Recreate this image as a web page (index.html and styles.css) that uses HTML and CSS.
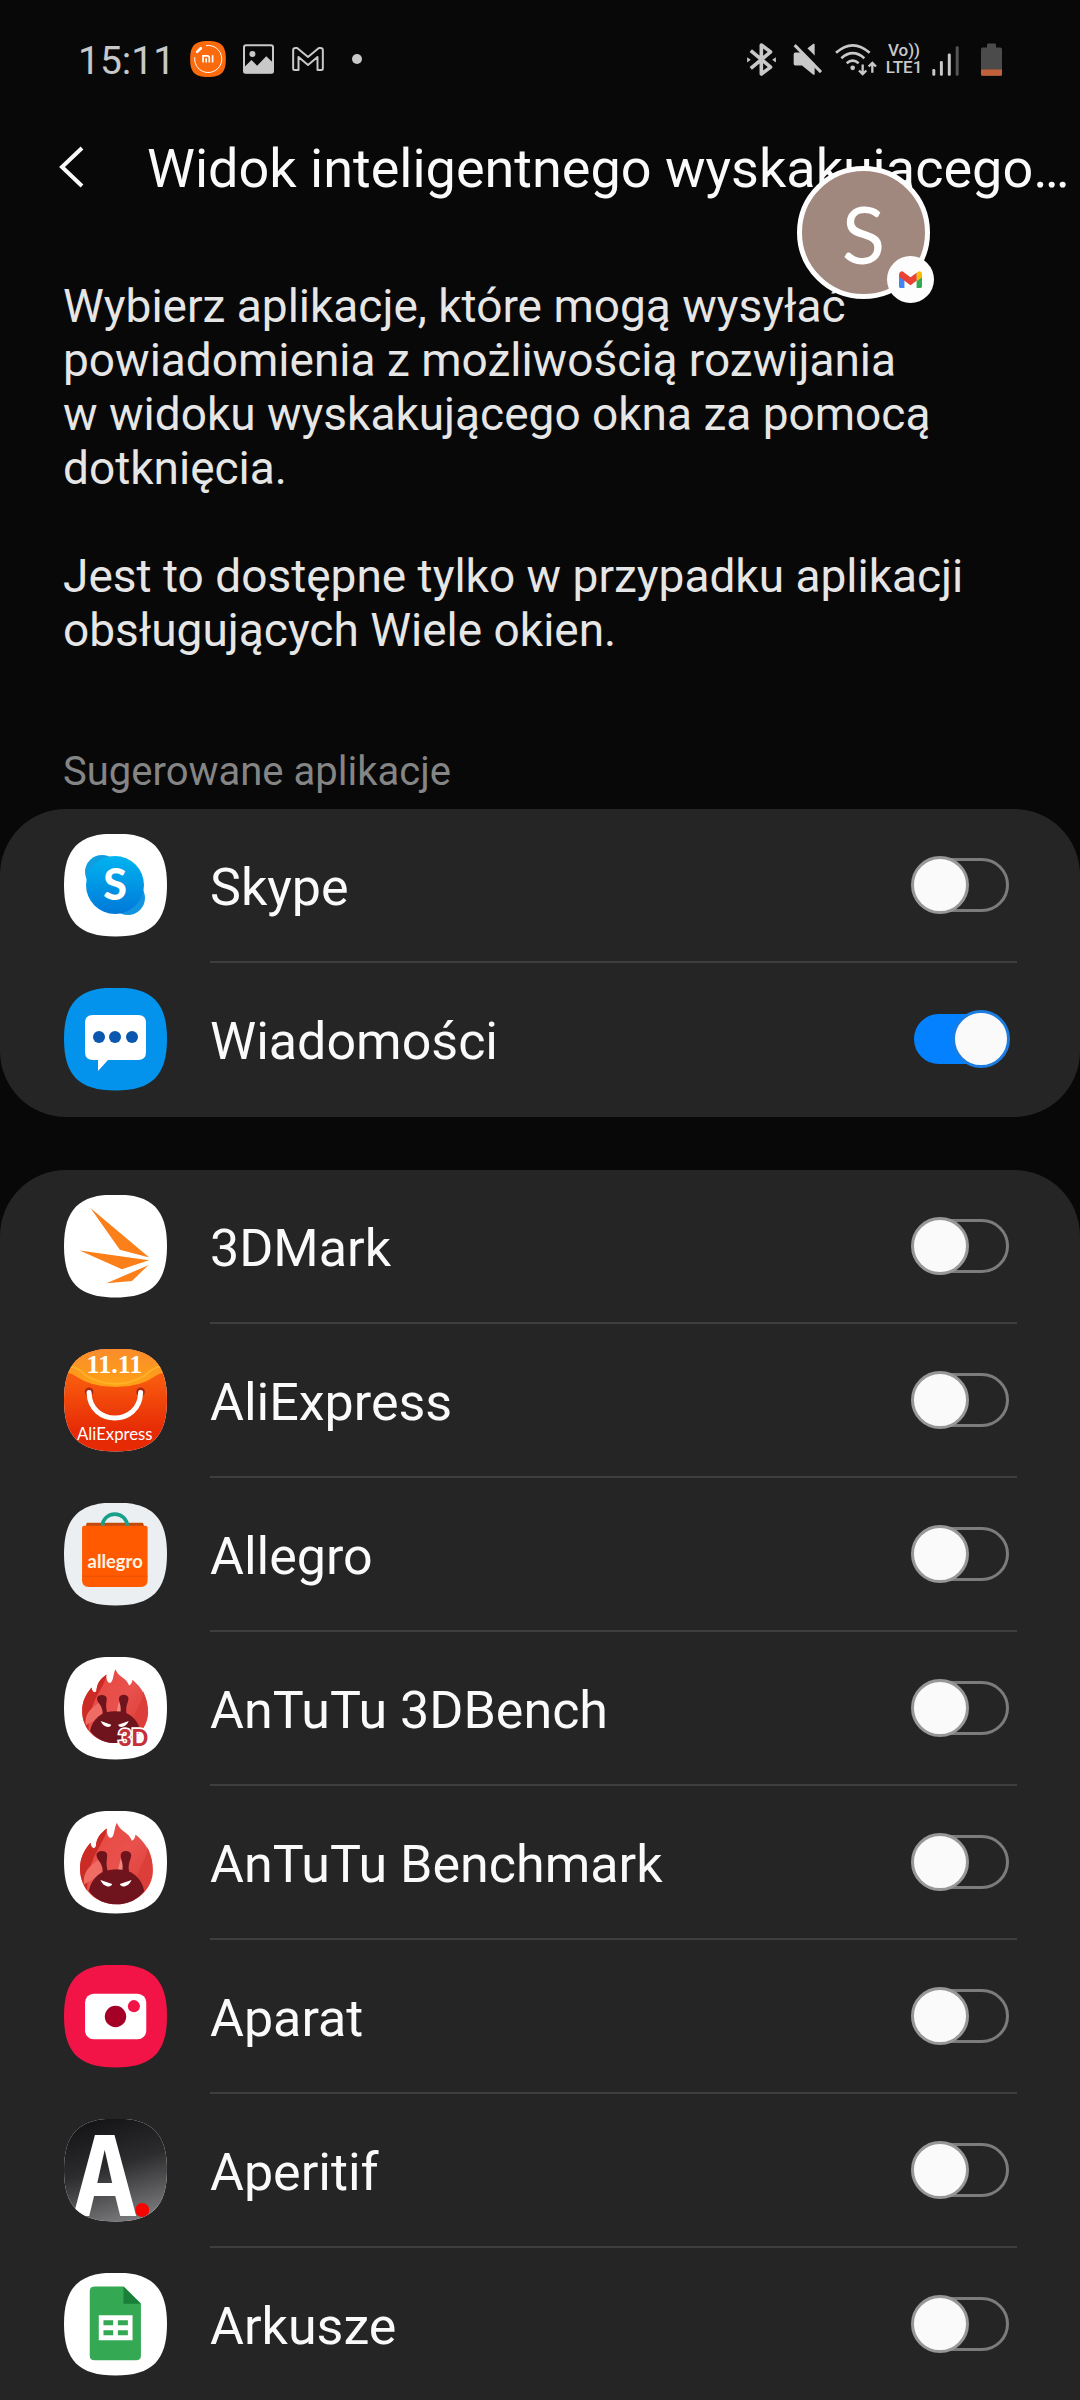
FILE: index.html
```html
<!DOCTYPE html>
<html lang="pl">
<head>
<meta charset="utf-8">
<meta name="viewport" content="width=device-width, initial-scale=1">
<title>Widok inteligentnego wyskakującego okna</title>
<link rel="stylesheet" href="styles.css">
</head>
<body>
<div class="status-bar">
  <div class="status-left">
    <time class="clock">15:11</time>
    <svg class="st-mi" viewBox="420 65 108 109" aria-hidden="true">
      <path fill="#fb6a0d" d="M474 65C514 65 528 79 528 119.500S514 174 474 174 420 160 420 119.500 434 65 474 65Z"/>
      <path d="M468 79A41 41 0 1 1 434 114" fill="none" stroke="#fff" stroke-width="3"/>
      <path d="M441 98L452 87" stroke="#fff" stroke-width="8" stroke-linecap="round"/>
      <path d="M459 130V110H471Q478 110 478 117V130M468.500 117V130M488 108V130" fill="none" stroke="#fff" stroke-width="5"/>
    </svg>
    <svg class="st-pic" viewBox="578 74 92 88" aria-hidden="true">
      <rect x="581" y="77" width="86" height="82" rx="6" fill="none" stroke="#c8c8c8" stroke-width="6"/>
      <circle cx="606" cy="103" r="9" fill="#c8c8c8"/>
      <path d="M580 144L603 121 620 138 647 110 668 130V160H580Z" fill="#c8c8c8"/>
    </svg>
    <svg class="st-gmail" viewBox="727 82 95 72" aria-hidden="true">
      <path d="M730 147V92Q730 85 737 85H742L774.500 112 807 85H812Q819 85 819 92V147Q819 151 815 151H803V112L774.500 136 746 112V151H734Q730 151 730 147Z" fill="none" stroke="#c8c8c8" stroke-width="6" stroke-linejoin="round"/>
    </svg>
    <span class="st-dot"></span>
  </div>
  <div class="status-right">
    <svg class="st-bt" viewBox="81 68 87 100" aria-hidden="true">
      <path d="M92 91L152 141 124 162V74L152 95 92 145" fill="none" stroke="#c8c8c8" stroke-width="11" stroke-linejoin="round"/>
      <path d="M81 111L92 119 81 127ZM168 111L157 119 168 127Z" fill="#c8c8c8"/>
    </svg>
    <svg class="st-mute" viewBox="219 70 90 98" aria-hidden="true">
      <path d="M226 98H246L280 72Q284 70 284 75V162Q284 167 279 164L246 137H226Q221 137 221 132V103Q221 98 226 98Z" fill="#c8c8c8"/>
      <path d="M230 66L316 151" stroke="#080808" stroke-width="18"/>
      <path d="M224 76L303 157" stroke="#c8c8c8" stroke-width="9"/>
    </svg>
    <svg class="st-wifi" viewBox="344 68 126 98" aria-hidden="true">
      <g fill="none" stroke="#c8c8c8" stroke-width="8">
        <path d="M347 97Q397 52 448 97M363 113Q397 83 432 113M379 128Q397 113 415 128"/>
        <path stroke-width="7" d="M427 132V160M416 150L427 161 438 150M456 157V128M445 138L456 127 467 138"/>
      </g>
      <circle cx="397" cy="142" r="7" fill="#c8c8c8"/>
    </svg>
    <span class="st-lte"><span>Vo))</span><span>LTE1</span></span>
    <svg class="st-signal" viewBox="636 76 82 90" aria-hidden="true">
      <g fill="#c8c8c8"><rect x="637" y="145" width="9" height="21" rx="4"/><rect x="660" y="121" width="9" height="45" rx="4"/><rect x="684" y="98" width="9" height="68" rx="4"/></g>
      <rect x="708" y="76" width="9" height="90" rx="4" fill="#555"/>
    </svg>
    <svg class="st-battery" viewBox="783 70 63 98" aria-hidden="true">
      <rect x="801" y="71" width="27" height="20" rx="3" fill="#4b4b4b"/>
      <rect x="783" y="83" width="63" height="85" rx="5" fill="#4b4b4b"/>
      <path d="M783 149H846V163Q846 168 841 168H788Q783 168 783 163Z" fill="#c1603a"/>
    </svg>
  </div>
</div>

<header class="app-bar">
  <button class="back" type="button" aria-label="Wstecz">
    <svg viewBox="0 0 26 42" aria-hidden="true"><path d="M23 2L3 21 23 40" fill="none" stroke="#fafafa" stroke-width="4"/></svg>
  </button>
  <h1>Widok inteligentnego wyskakującego…</h1>
</header>

<main class="content">
  <div class="intro">
    <p>Wybierz aplikacje, które mogą wysyłać powiadomienia z&nbsp;możliwością rozwijania w&nbsp;widoku wyskakującego okna za pomocą dotknięcia.</p>
    <p>Jest to dostępne tylko w&nbsp;przypadku aplikacji obsługujących Wiele okien.</p>
  </div>

  <h2>Sugerowane aplikacje</h2>
  <ul class="card">
    <li class="row">
      <svg class="icon" viewBox="0 0 103 103" aria-hidden="true">
        <defs>
          <linearGradient id="sk" x1="0" y1="0" x2="0" y2="1"><stop offset="0" stop-color="#00b4f0"/><stop offset="1" stop-color="#0078d9"/></linearGradient>
        </defs>
        <circle cx="38" cy="38" r="17" fill="#0f9fe0"/><circle cx="64" cy="64" r="17" fill="#1493e0"/>
        <circle cx="51" cy="51" r="29" fill="url(#sk)"/>
        <text x="51" y="66" text-anchor="middle" font-family="Lato, sans-serif" font-weight="900" font-size="43" fill="#fff">S</text>
      </svg>
      <div class="row-body"><label for="a1">Skype</label><input id="a1" type="checkbox" role="switch"></div>
    </li>
    <li class="row">
      <svg class="icon icon-msg" viewBox="0 0 103 103" aria-hidden="true">
        <path d="M29 27H74Q82 27 82 35V64Q82 72 74 72H44L34 83V72H29Q21 72 21 64V35Q21 27 29 27Z" fill="#fff"/>
        <g fill="#0a57b0"><circle cx="35" cy="49" r="6"/><circle cx="51" cy="49" r="6"/><circle cx="68" cy="49" r="6"/></g>
      </svg>
      <div class="row-body"><label for="a2">Wiadomości</label><input id="a2" type="checkbox" role="switch" checked></div>
    </li>
  </ul>

  <ul class="card card-long">
    <li class="row">
      <svg class="icon" viewBox="43 75 308 308" aria-hidden="true">
        <path d="M122 114L298 262 210 239ZM90 241L297 270 216 297ZM295 285L246 332 170 339Z" fill="#fb8019"/>
      </svg>
      <div class="row-body"><label for="b1">3DMark</label><input id="b1" type="checkbox" role="switch"></div>
    </li>
    <li class="row">
      <svg class="icon" viewBox="43 538 308 308" aria-hidden="true">
        <defs>
          <linearGradient id="ali" x1="0" y1="0" x2="0" y2="1"><stop offset="0.300" stop-color="#f8590e"/><stop offset="0.800" stop-color="#e62a05"/></linearGradient>
          <linearGradient id="ali2" x1="0" y1="0" x2="0" y2="1"><stop offset="0" stop-color="#f98c2c"/><stop offset="1" stop-color="#ffa216"/></linearGradient>
        </defs>
        <path d="M43 538H351V846H43Z" fill="url(#ali)"/>
        <path d="M43 538H351V612Q335 606 318 618Q270 652 197 652T76 618Q59 606 43 612Z" fill="url(#ali2)"/>
        <path d="M60 590Q85 592 110 618 150 642 197 642T284 618Q309 592 334 590" fill="none" stroke="#ffc02e" stroke-width="6" opacity="0.600"/>
        <text x="194" y="611" text-anchor="middle" font-family="Liberation Serif, serif" font-weight="700" font-size="78" fill="#fff">11.11</text>
        <circle cx="118" cy="666" r="13" fill="#a92a12"/><circle cx="272" cy="666" r="13" fill="#a92a12"/>
        <path d="M118 668C120 770 270 770 272 668" fill="none" stroke="#fff" stroke-width="15" stroke-linecap="round"/>
        <text x="195" y="810" text-anchor="middle" font-family="Lato, sans-serif" font-size="50" fill="#fff">AliExpress</text>
      </svg>
      <div class="row-body"><label for="b2">AliExpress</label><input id="b2" type="checkbox" role="switch"></div>
    </li>
    <li class="row">
      <svg class="icon icon-allegro" viewBox="43 69 308 308" aria-hidden="true">
        <path d="M111 128H279L284 142H107Z" fill="#c24b0c"/>
        <path d="M97 143Q97 137 103 137H287Q293 137 293 143V300Q293 320 273 320H117Q97 320 97 300Z" fill="#ff5a00"/>
        <path d="M97 288H293" stroke="#e85204" stroke-width="3"/>
        <path d="M158 137A37 35 0 0 1 232 137" fill="none" stroke="#18a18a" stroke-width="11"/>
        <text x="196" y="262" text-anchor="middle" font-family="Lato, sans-serif" font-weight="700" font-size="55" fill="#fff3e4">allegro</text>
      </svg>
      <div class="row-body"><label for="b3">Allegro</label><input id="b3" type="checkbox" role="switch"></div>
    </li>
    <li class="row">
      <svg class="icon" viewBox="43 532 308 308" aria-hidden="true">
        <defs>
          <linearGradient id="fire" x1="0" y1="0" x2="1" y2="1"><stop offset="0" stop-color="#e8453f"/><stop offset="0.500" stop-color="#e9514c"/><stop offset="1" stop-color="#d93832"/></linearGradient>
          <g id="antutu">
            <path d="M91 235C91 202 104 180 122 158C124 172 131 179 138 170C140 142 152 130 171 115C170 130 175 144 184 143C195 138 192 115 201 98C211 125 238 126 246 152C253 148 256 142 257 133C290 160 309 195 309 240C309 300 255 342 200 342C140 342 91 300 91 235Z" fill="url(#fire)"/>
            <path d="M91 235C91 202 104 180 122 158C124 172 131 179 138 170C140 142 152 130 171 115C165 165 115 190 112 300C97 280 91 258 91 235Z" fill="#cb2b25"/>
            <path d="M103 283C98 240 125 225 150 205L160 250Z" fill="#ee6c63"/>
            <path d="M216 192L204 240H232Z" fill="#f08a80"/>
            <path d="M292 170C296 200 270 220 262 262L285 300C312 262 314 215 292 170Z" fill="#dc3f39"/>
            <path d="M117 302C125 262 155 237 200 237S275 262 283 302C262 330 232 342 200 342S138 330 117 302Z" fill="#6f141c"/>
            <path d="M158 250C164 220 140 212 140 194C141 179 170 179 172 193C173 207 166 215 175 248ZM216 248C224 218 210 207 213 192C217 178 243 180 244 194C244 210 231 220 239 250Z" fill="#6f141c"/>
            <path d="M152 269L187 281C184 294 160 290 152 269ZM245 269L210 281C213 294 237 290 245 269Z" fill="#fff"/>
          </g>
        </defs>
        <use href="#antutu" transform="translate(15 480) scale(0.905)"/>
        <text x="251" y="799" text-anchor="middle" font-family="Liberation Sans, sans-serif" font-weight="700" font-size="70" fill="#c4313a" class="outlined">3D</text>
      </svg>
      <div class="row-body"><label for="b4">AnTuTu 3DBench</label><input id="b4" type="checkbox" role="switch"></div>
    </li>
    <li class="row">
      <svg class="icon" viewBox="43 63 308 308" aria-hidden="true"><use href="#antutu"/></svg>
      <div class="row-body"><label for="b5">AnTuTu Benchmark</label><input id="b5" type="checkbox" role="switch"></div>
    </li>
    <li class="row">
      <svg class="icon icon-aparat" viewBox="43 525 308 308" aria-hidden="true">
        <rect x="106" y="611" width="183" height="136" rx="26" fill="#fff"/>
        <circle cx="197" cy="679" r="32" fill="#a50026"/><circle cx="252" cy="648" r="18" fill="#f31447"/>
      </svg>
      <div class="row-body"><label for="b6">Aparat</label><input id="b6" type="checkbox" role="switch"></div>
    </li>
    <li class="row">
      <svg class="icon" viewBox="43 57 308 308" aria-hidden="true">
        <defs>
          <linearGradient id="ap" x1="0.350" y1="0" x2="0.650" y2="1"><stop offset="0" stop-color="#151416"/><stop offset="0.450" stop-color="#2c2c2e"/><stop offset="1" stop-color="#7c7c7e"/></linearGradient>
        </defs>
        <path d="M43 57H351V365H43Z" fill="url(#ap)"/>
        <text x="165" y="346" text-anchor="middle" font-family="DejaVu Sans Mono, monospace" font-weight="700" font-size="330" fill="#fff">A</text>
        <circle cx="277" cy="329" r="21" fill="#f60400"/>
      </svg>
      <div class="row-body"><label for="b7">Aperitif</label><input id="b7" type="checkbox" role="switch"></div>
    </li>
    <li class="row">
      <svg class="icon" viewBox="43 519 308 308" aria-hidden="true">
        <path d="M134 559H221L273 611V766Q273 780 259 780H134Q120 780 120 766V573Q120 559 134 559Z" fill="#34a853"/>
        <path d="M221 559L273 611H221Z" fill="#188038"/>
        <path d="M147 645H248V720H147Z" fill="#fff"/>
        <path d="M161 660H190V675H161ZM204 660H234V675H204ZM161 690H190V705H161ZM204 690H234V705H204Z" fill="#34a853"/>
      </svg>
      <div class="row-body"><label for="b8">Arkusze</label><input id="b8" type="checkbox" role="switch"></div>
    </li>
  </ul>
</main>

<button class="bubble" type="button" aria-label="Powiadomienie Gmail">
  <span class="bubble-face">S</span>
  <span class="bubble-badge">
    <svg viewBox="358 362 68 50" aria-hidden="true">
      <path d="M358 375H374V412H362Q358 412 358 408Z" fill="#4285f4"/>
      <path d="M410 375H426V408Q426 412 422 412H410Z" fill="#34a853"/>
      <path d="M410 367Q418 359 424 365 426 368 426 373V380L410 393Z" fill="#fbbc04"/>
      <path d="M358 373Q358 366 364 363 369 362 374 367L392 380 410 367V391L392 404 374 391 358 379Z" fill="#ea4335"/>
    </svg>
  </span>
</button>
</body>
</html>
```
FILE: styles.css
```css
* {
  box-sizing: border-box;
}

body {
  margin: 0;
  height: 100vh;
  display: flex;
  flex-direction: column;
  position: relative;
  overflow: hidden;
  background: #080808;
  color: #fafafa;
  font-family: Roboto, "Noto Sans", sans-serif;
}

h1,
h2,
p,
ul {
  margin: 0;
  padding: 0;
  font-weight: 400;
}

button {
  padding: 0;
  border: 0;
  background: none;
  color: inherit;
  font: inherit;
}

svg {
  display: block;
  flex: none;
}

/* Status bar */
.status-bar {
  flex: none;
  height: 118px;
  padding: 0 78px;
  display: flex;
  justify-content: space-between;
  align-items: center;
  color: #c8c8c8;
}

.status-left {
  display: flex;
  align-items: center;
}

.clock {
  padding-top: 4px;
  font-size: 39px;
  line-height: 46px;
  margin-right: 15px;
}

.st-mi {
  width: 36px;
  height: 36px;
  margin-right: 17px;
}

.st-pic {
  width: 31px;
  height: 30px;
  margin-right: 18px;
}

.st-gmail {
  width: 32px;
  height: 24px;
  margin-right: 28px;
}

.st-dot {
  width: 10px;
  height: 10px;
  border-radius: 50%;
  background: #c8c8c8;
}

.status-right {
  display: flex;
  align-items: flex-end;
}

.st-bt {
  width: 29px;
  height: 33px;
  margin-right: 17px;
}

.st-mute {
  width: 30px;
  height: 33px;
  margin-right: 12px;
}

.st-wifi {
  width: 42px;
  height: 33px;
  margin-right: 8px;
}

.st-lte {
  width: 38px;
  margin-right: 9px;
  display: flex;
  flex-direction: column;
  align-items: center;
  font-size: 17px;
  font-weight: 500;
  line-height: 17px;
}

.st-signal {
  width: 27px;
  height: 30px;
  margin-right: 22px;
}

.st-battery {
  width: 21px;
  height: 33px;
}

/* Title bar */
.app-bar {
  flex: none;
  height: 98px;
  padding-left: 59px;
  display: flex;
  align-items: center;
  gap: 62px;
}

.back svg {
  width: 26px;
  height: 42px;
}

h1 {
  padding-top: 3px;
  font-size: 54px;
  line-height: 62px;
  white-space: nowrap;
}

/* Scrolling content */
.content {
  flex: 1;
  min-height: 0;
  overflow-y: auto;
  scrollbar-width: none;
}

.intro {
  padding: 63px 63px 0;
  display: flex;
  flex-direction: column;
  gap: 54px;
  color: #e6e6e6;
  font-size: 46px;
  line-height: 54px;
}

h2 {
  padding: 92px 63px 14px;
  color: #858585;
  font-size: 40px;
  line-height: 46px;
}

.card {
  list-style: none;
  background: #252525;
  border-radius: 66px;
}

/* The long list runs on past the bottom of the screen */
.card-long {
  margin-top: 53px;
  border-radius: 66px 66px 0 0;
}

.row {
  height: 154px;
  padding: 0 63px 0 64px;
  display: flex;
  align-items: center;
  gap: 43px;
}

.icon {
  width: 103px;
  height: 103px;
  margin-bottom: 2px;
  background: #fff;
  clip-path: path("M51.500 0C88 0 103 15 103 51.500S88 103 51.500 103 0 88 0 51.500 15 0 51.500 0Z");
}

.icon-msg {
  background: #0393ec;
}

.icon-allegro {
  background: #eceff1;
}

.icon-aparat {
  background: #f31447;
}

.outlined {
  stroke: #fff;
  stroke-width: 10px;
  paint-order: stroke;
}

.row-body {
  flex: 1;
  align-self: stretch;
  padding-right: 7px;
  border-bottom: 2px solid #3e3e3e;
  display: flex;
  align-items: center;
  justify-content: space-between;
}

.row:last-child .row-body {
  border-bottom-color: transparent;
}

.row label {
  padding-top: 6px;
  font-size: 52px;
  line-height: 62px;
}

/* Switch: the track and the thumb share one grid cell */
.row input {
  appearance: none;
  margin: 0;
  width: 99px;
  height: 58px;
  display: grid;
  align-items: center;
}

.row input::before,
.row input::after {
  content: "";
  grid-area: 1 / 1;
  box-sizing: border-box;
}

.row input::before {
  height: 54px;
  margin: 0 1px 0 2px;
  border: 3px solid #7c7c7c;
  border-radius: 27px;
}

.row input::after {
  width: 58px;
  height: 58px;
  border: 3px solid #979797;
  border-radius: 50%;
  background: #fafafa;
}

.row input:checked::before {
  height: 50px;
  margin-left: 3px;
  border-color: #0381fe;
  background: #0381fe;
}

.row input:checked::after {
  justify-self: end;
  border-color: #1c7de0;
}

/* Floating conversation bubble */
.bubble {
  position: absolute;
  top: 166px;
  right: 150px;
}

.bubble-face {
  width: 133px;
  height: 133px;
  display: grid;
  place-items: center;
  border: 5px solid #fdfdfd;
  border-radius: 50%;
  background: #a1887f;
  color: #fff;
  font-family: Lato, sans-serif;
  font-size: 80px;
  line-height: 94px;
}

.bubble-badge {
  position: absolute;
  right: -4px;
  bottom: -4px;
  width: 47px;
  height: 47px;
  display: grid;
  place-items: center;
  border-radius: 50%;
  background: #fdfdfd;
}

.bubble-badge svg {
  width: 23px;
  height: 17px;
}
```
